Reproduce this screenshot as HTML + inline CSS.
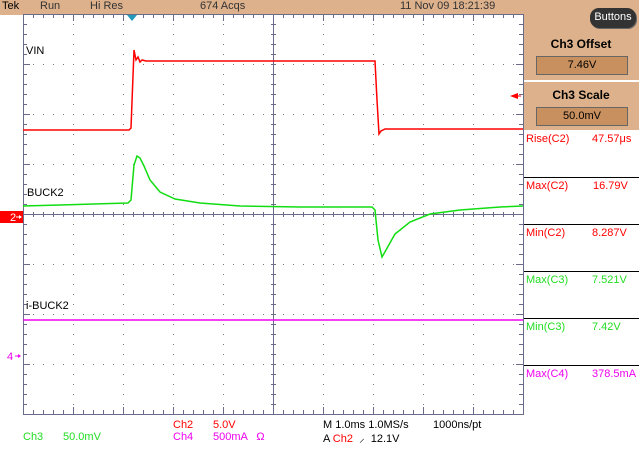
<!DOCTYPE html><html><head><style>
body{margin:0;width:639px;height:453px;background:#fff;position:relative;overflow:hidden;font-family:"Liberation Sans",sans-serif;font-size:11px}
.t{position:absolute;white-space:nowrap}
</style></head><body>
<div style="position:absolute;left:0;top:0;width:639px;height:15px;background:#dcb18c"></div>
<div class="t" style="left:2px;top:0">Tek</div>
<div class="t" style="left:40px;top:0;color:#333">Run</div>
<div class="t" style="left:90px;top:0;color:#333">Hi Res</div>
<div class="t" style="left:200px;top:0;color:#333">674 Acqs</div>
<div class="t" style="left:400px;top:0;color:#333">11 Nov 09 18:21:39</div>
<div style="position:absolute;left:523px;top:15px;width:116px;height:438px;background:#fff"></div>
<div style="position:absolute;left:523px;top:0;width:116px;height:130px;background:#dcb18c"></div>
<div style="position:absolute;left:590px;top:8px;width:46px;height:20px;background:#333;border-radius:9px;color:#fff;text-align:center;line-height:18px;font-size:11px;box-shadow:1px 1px 0 #666">Buttons</div>
<div class="t" style="left:523px;top:37px;width:116px;text-align:center;font-weight:bold;font-size:12px">Ch3 Offset</div>
<div style="position:absolute;left:536px;top:56px;width:90px;height:17px;background:#c8905e;border:1px solid #666;text-align:center;line-height:17px">7.46V</div>
<div style="position:absolute;left:523px;top:80px;width:116px;height:2px;background:#fff"></div>
<div class="t" style="left:523px;top:88px;width:116px;text-align:center;font-weight:bold;font-size:12px">Ch3 Scale</div>
<div style="position:absolute;left:536px;top:107px;width:90px;height:17px;background:#c8905e;border:1px solid #666;text-align:center;line-height:17px">50.0mV</div>
<div class="t" style="left:526px;top:133px;color:#f00">Rise(C2)</div><div class="t" style="left:592px;top:133px;color:#f00">47.57μs</div>
<div class="t" style="left:526px;top:180px;color:#f00">Max(C2)</div><div class="t" style="left:593px;top:180px;color:#f00">16.79V</div>
<div class="t" style="left:526px;top:227px;color:#f00">Min(C2)</div><div class="t" style="left:592px;top:227px;color:#f00">8.287V</div>
<div class="t" style="left:526px;top:274px;color:#2d2">Max(C3)</div><div class="t" style="left:592px;top:274px;color:#2d2">7.521V</div>
<div class="t" style="left:526px;top:321px;color:#2d2">Min(C3)</div><div class="t" style="left:592px;top:321px;color:#2d2">7.42V</div>
<div class="t" style="left:526px;top:368px;color:#e0e">Max(C4)</div><div class="t" style="left:592px;top:368px;color:#e0e">378.5mA</div>
<svg width="639" height="453" style="position:absolute;left:0;top:0">
<g stroke="#000" stroke-width="1"><line x1="523" y1="177.5" x2="639" y2="177.5"/><line x1="523" y1="224.5" x2="639" y2="224.5"/><line x1="523" y1="271.5" x2="639" y2="271.5"/><line x1="523" y1="318.5" x2="639" y2="318.5"/><line x1="523" y1="365.5" x2="639" y2="365.5"/></g>
<g id="grid" stroke="#6a6a8a" fill="none">
<rect x="23.5" y="14.5" width="500" height="400"/>
<line x1="273.5" y1="14" x2="273.5" y2="414"/><line x1="23" y1="214.5" x2="523" y2="214.5"/>
</g>
<g stroke="#6a6a8a" id="ticks"></g>
<g fill="#777" id="dots"></g>
<polygon points="127,15 137,15 132,21" fill="#29b"/>
<polyline fill="none" stroke="#f00" stroke-width="1.5" points="23,130 129,130 131,128 134,50 136,60 138,57 140,62 142,60 146,61 375,61 377,100 379,134 381,131 385,129 523,129"/>
<polyline fill="none" stroke="#1d1" stroke-width="1.5" points="23,206 60,205 128,203 131,200 134,165 137,156 140,158 144,166 150,180 160,192 175,199 200,203 240,206 300,207 372,207 375,210 378,240 382,257 386,250 395,234 410,222 430,214 460,210 500,207 523,206"/>
<polyline fill="none" stroke="#e0e" stroke-width="1.5" points="23,320 523,320"/>
<polygon points="510,96 518,93 518,99" fill="#f00"/><line x1="513" y1="96" x2="521" y2="96" stroke="#f00"/>
<rect x="0" y="211" width="23" height="12" fill="#f00"/>
<text x="10" y="221" fill="#fff" font-size="11" font-family="Liberation Sans">2</text>
<line x1="16" y1="217" x2="21" y2="217" stroke="#fff"/><polygon points="19,215 22,217 19,219" fill="#fff"/>
<text x="7" y="360" fill="#e0e" font-size="11" font-family="Liberation Sans">4</text>
<line x1="15" y1="356" x2="20" y2="356" stroke="#e0e"/><polygon points="18,354 21,356 18,358" fill="#e0e"/>
</svg>
<div class="t" style="left:26px;top:45px">VIN</div>
<div class="t" style="left:27px;top:187px">BUCK2</div>
<div class="t" style="left:26px;top:300px">i-BUCK2</div>
<div class="t" style="left:173px;top:419px;color:#f00">Ch2</div><div class="t" style="left:213px;top:419px;color:#f00">5.0V</div>
<div class="t" style="left:23px;top:431px;color:#2d2">Ch3</div><div class="t" style="left:63px;top:431px;color:#2d2">50.0mV</div>
<div class="t" style="left:173px;top:431px;color:#e0e">Ch4</div><div class="t" style="left:213px;top:431px;color:#e0e">500mA &nbsp;&nbsp;Ω</div>
<div class="t" style="left:323px;top:419px">M 1.0ms 1.0MS/s</div>
<div class="t" style="left:433px;top:419px">1000ns/pt</div>
<div class="t" style="left:323px;top:431px">A <span style="color:#f00">Ch2</span> &nbsp;⸝ &nbsp;12.1V</div>
<script>
var ns="http://www.w3.org/2000/svg",t=document.getElementById('ticks'),d=document.getElementById('dots');
function L(x1,y1,x2,y2){var l=document.createElementNS(ns,'line');l.setAttribute('x1',x1);l.setAttribute('y1',y1);l.setAttribute('x2',x2);l.setAttribute('y2',y2);t.appendChild(l);}
for(var x=23;x<=523;x+=10){L(x+.5,14,x+.5,18);L(x+.5,410,x+.5,414);L(x+.5,212,x+.5,217);}
for(var y=14;y<=414;y+=10){L(23,y+.5,27,y+.5);L(519,y+.5,523,y+.5);L(271,y+.5,276,y+.5);}
for(var x=73;x<523;x+=50)for(var y=24;y<414;y+=10){if(x==273)continue;var r=document.createElementNS(ns,'rect');r.setAttribute('x',x);r.setAttribute('y',y);r.setAttribute('width',1);r.setAttribute('height',1);d.appendChild(r);}
for(var y=64;y<414;y+=50)for(var x=33;x<523;x+=10){if(y==214)continue;var r=document.createElementNS(ns,'rect');r.setAttribute('x',x);r.setAttribute('y',y);r.setAttribute('width',1);r.setAttribute('height',1);d.appendChild(r);}
for(var y=64;y<414;y+=50){L(23,y+.5,30,y+.5);L(516,y+.5,523,y+.5);}
for(var x=73;x<523;x+=50){L(x+.5,14,x+.5,21);L(x+.5,407,x+.5,414);}
</script>
</body></html>
